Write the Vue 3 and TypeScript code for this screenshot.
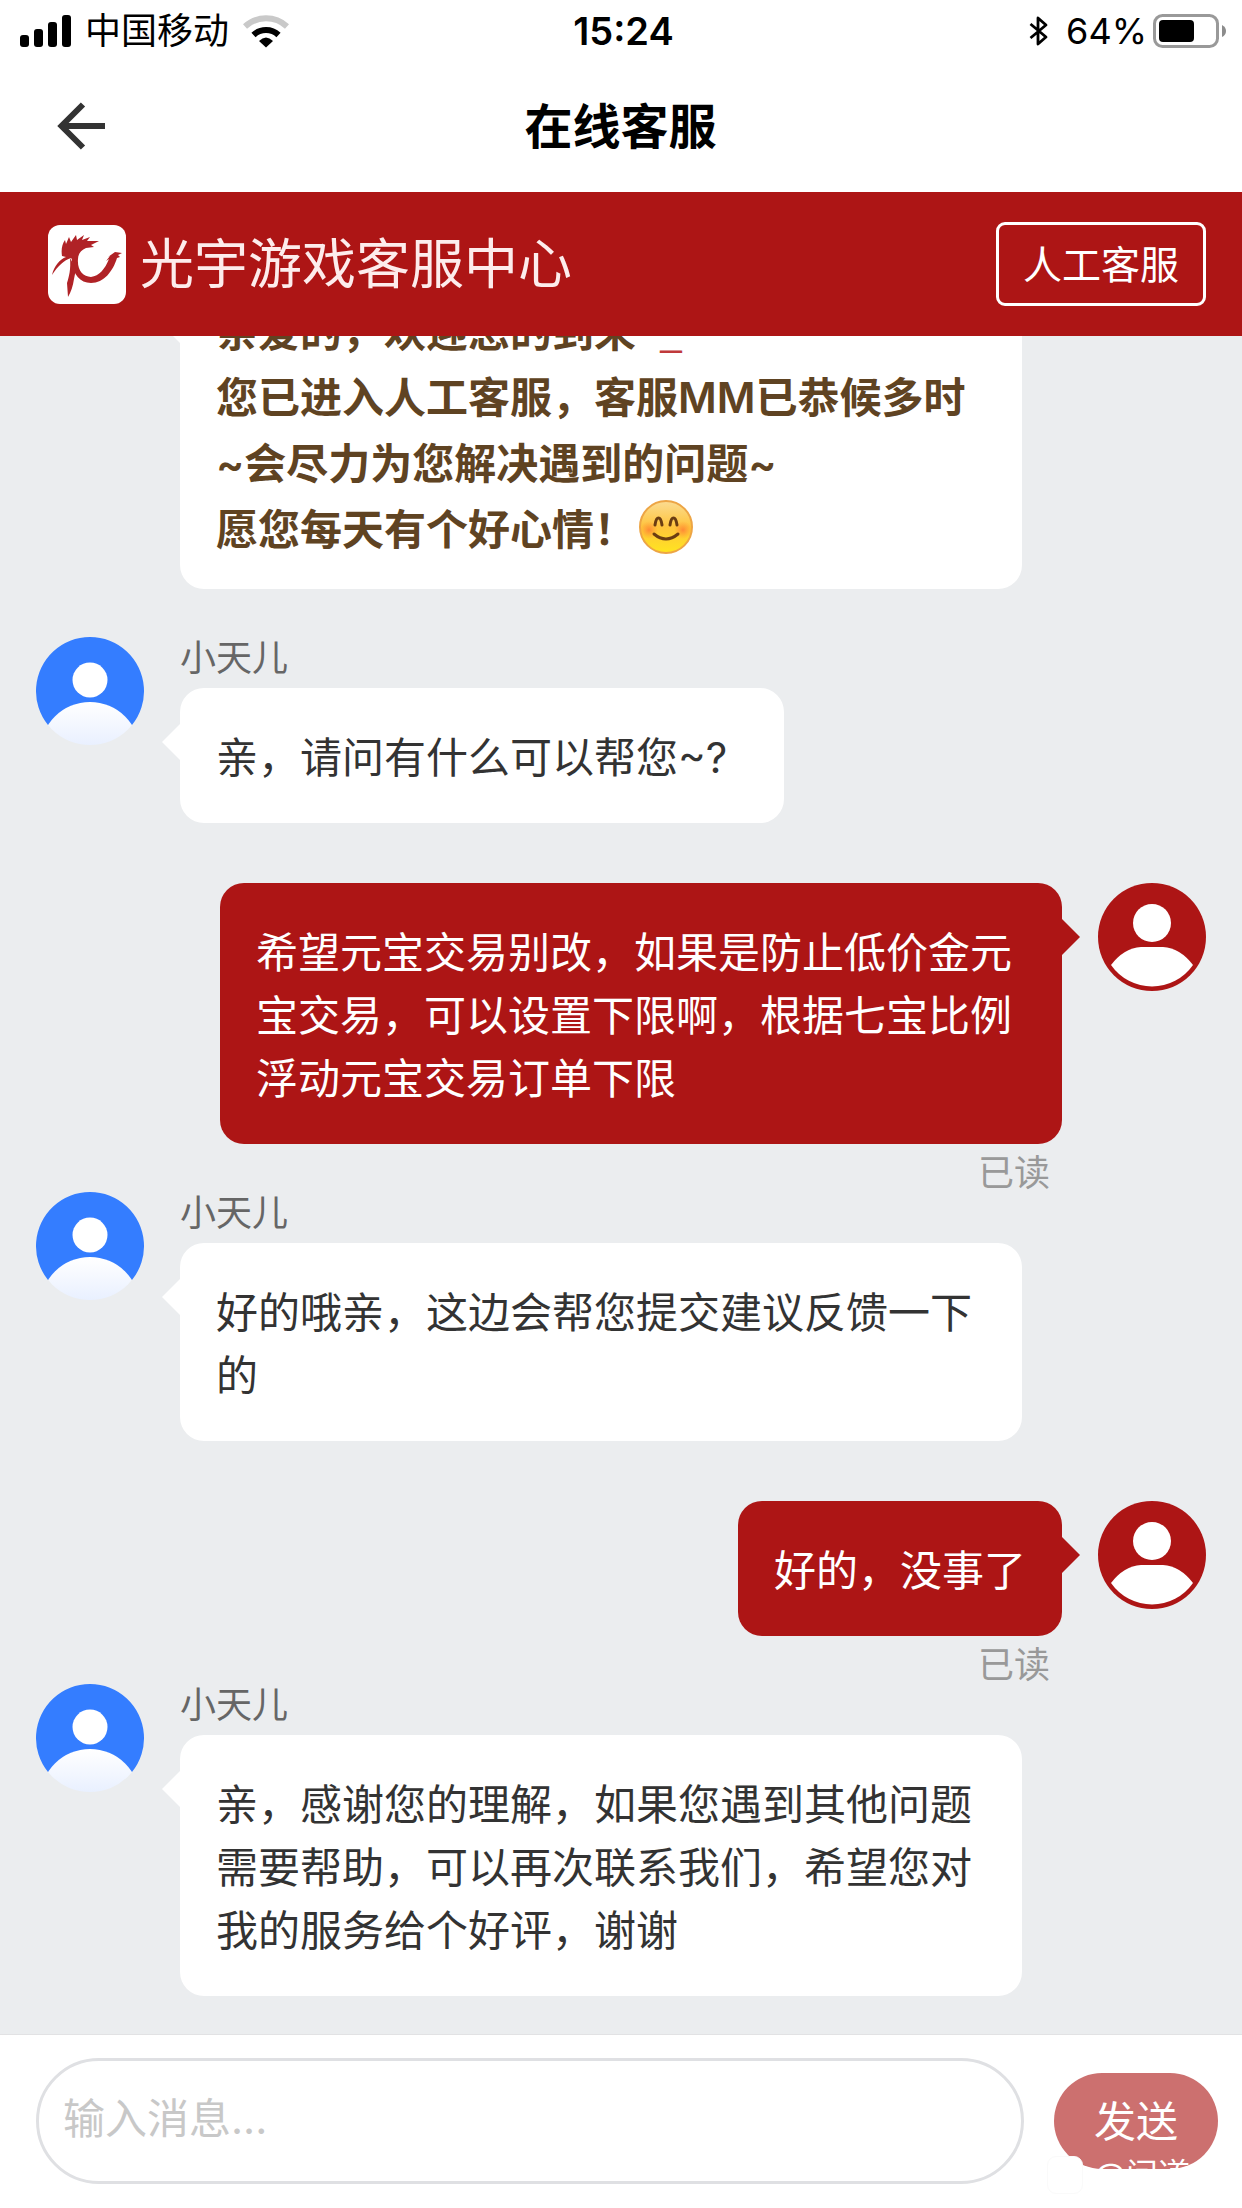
<script setup lang="ts">
import { ref } from 'vue'

interface Message {
  id: number
  from: 'agent' | 'user'
  name?: string
  text: string
}

const messages: Message[] = [
  { id: 1, from: 'agent', name: '小天儿', text: '亲，请问有什么可以帮您~?\u2002' },
  {
    id: 2,
    from: 'user',
    text: '希望元宝交易别改，如果是防止低价金元宝交易，可以设置下限啊，根据七宝比例浮动元宝交易订单下限',
  },
  { id: 3, from: 'agent', name: '小天儿', text: '好的哦亲，这边会帮您提交建议反馈一下的' },
  { id: 4, from: 'user', text: '好的，没事了' },
  {
    id: 5,
    from: 'agent',
    name: '小天儿',
    text: '亲，感谢您的理解，如果您遇到其他问题需要帮助，可以再次联系我们，希望您对我的服务给个好评，谢谢',
  },
]

const draft = ref('')
</script>

<template>
  <div class="app">
    <div class="status">
      <div class="status-left">
        <svg class="signal" width="51" height="32" viewBox="0 0 51 32" aria-hidden="true">
          <rect x="0" y="20" width="9" height="12" rx="3" />
          <rect x="14" y="14" width="9" height="18" rx="3" />
          <rect x="28" y="7" width="9" height="25" rx="3" />
          <rect x="42" y="0" width="9" height="32" rx="3" />
        </svg>
        <span>中国移动</span>
        <svg class="wifi" width="46" height="34" viewBox="0 0 46 34" aria-hidden="true">
          <path d="M2 12.5A31 31 0 0 1 44 12.5" fill="none" stroke="#c9c9c9" stroke-width="6" />
          <path d="M10.5 21A18 18 0 0 1 35.500 21" fill="none" stroke="#000" stroke-width="6" />
          <path d="M16 27Q23 20 30 27L23 33.500Z" />
        </svg>
      </div>
      <time class="clock">15:24</time>
      <div class="status-right">
        <svg class="bluetooth" width="19" height="30" viewBox="0 0 19 30" aria-hidden="true">
          <path d="M1.500 8L17 21L9 28V2L17 9L1.500 22" fill="none" stroke="#000" stroke-width="2.800" stroke-linejoin="round" />
        </svg>
        <span>64%</span>
        <svg class="battery" width="74" height="34" viewBox="0 0 74 34" aria-hidden="true">
          <rect x="1.500" y="1.500" width="63" height="31" rx="8" fill="none" stroke="#999" stroke-width="3" />
          <rect x="6" y="6" width="35" height="22" rx="4" />
          <path d="M69 11Q73 13 73 17T69 23Z" fill="#8c8c8c" />
        </svg>
      </div>
    </div>

    <header class="nav">
      <button class="back" type="button" aria-label="返回">
        <svg width="48" height="48" viewBox="0 0 48 48" aria-hidden="true">
          <path d="M26 2.500L4.500 24L26 45.500M5 24H48" fill="none" stroke="#333" stroke-width="6" />
        </svg>
      </button>
      <h1>在线客服</h1>
    </header>

    <div class="banner">
      <div class="brand">
        <svg width="78" height="79" viewBox="0 0 78 79" aria-hidden="true">
          <rect width="78" height="79" rx="12" fill="#fff" />
          <g fill="#b02226">
            <path d="M14 31C13 25 14 19 17 15L18 19L21 12L23 17L28 10L29 15L36 10L34 15L42 12L39 16L51 16L43 20L46 22L38 23C33 25 30 29 30 34C29 45 35 52 43 52C51 51 57 44 61 34L58 36L62 31L60 32L67 27L74 28L70 30L72 32L69 33C65 46 56 58 43 58C32 58 25 49 24 37C24 35 24 34 23 33C16 35 10 41 4 50C6 41 12 34 18 32Z" />
            <path d="M22 33C23 44 21 52 19 58L20 72C23 67 25 61 26 54L28 44Z" />
          </g>
        </svg>
        <span>光宇游戏客服中心</span>
      </div>
      <button class="human" type="button">人工客服</button>
    </div>

    <main class="chat">
      <section class="row agent">
        <div class="bubble welcome">
          亲爱的，欢迎您的到来<span class="face">^_^</span><br />
          您已进入人工客服，客服MM已恭候多时<br />
          ~会尽力为您解决遇到的问题~<br />
          愿您每天有个好心情！<svg class="emoji" width="54" height="54" viewBox="0 0 54 54" role="img" aria-label="微笑">
            <defs>
              <linearGradient id="face-fill" x1="0" y1="0" x2="0" y2="1">
                <stop offset="0" stop-color="#fbdc92" />
                <stop offset="0.500" stop-color="#ffc43c" />
                <stop offset="1" stop-color="#ffe51f" />
              </linearGradient>
              <radialGradient id="cheek">
                <stop offset="0" stop-color="#ff7034" stop-opacity="0.700" />
                <stop offset="1" stop-color="#ff8a34" stop-opacity="0" />
              </radialGradient>
            </defs>
            <circle cx="27" cy="27" r="26" fill="url(#face-fill)" stroke="#eda545" stroke-width="2" />
            <circle cx="10" cy="30" r="9" fill="url(#cheek)" />
            <circle cx="44" cy="30" r="9" fill="url(#cheek)" />
            <path d="M16 25Q17 18 19.500 18T23 25M31 25Q32 18 34.500 18T38 25" fill="none" stroke="#6b3d12" stroke-width="3" stroke-linecap="round" />
            <path d="M15 34Q27 44 39 34" fill="none" stroke="#6b3d12" stroke-width="3" stroke-linecap="round" />
          </svg>
        </div>
      </section>

      <section v-for="m in messages" :key="m.id" class="row" :class="m.from">
        <svg v-if="m.from === 'agent'" class="avatar" viewBox="0 0 108 108" aria-hidden="true">
          <defs>
            <linearGradient :id="'torso-' + m.id" x1="0" y1="65" x2="0" y2="108" gradientUnits="userSpaceOnUse">
              <stop offset="0" stop-color="#fff" />
              <stop offset="1" stop-color="#e9f0ff" />
            </linearGradient>
            <clipPath :id="'disc-' + m.id"><circle cx="54" cy="54" r="54" /></clipPath>
          </defs>
          <path d="M12 88A54 54 0 1 1 96 88Z" fill="#347dff" />
          <g :clip-path="'url(#disc-' + m.id + ')'">
            <circle cx="54" cy="115" r="50" :fill="'url(#torso-' + m.id + ')'" />
          </g>
          <circle cx="54" cy="43" r="17.500" fill="#fff" />
        </svg>
        <svg v-else class="avatar" viewBox="0 0 108 108" aria-hidden="true">
          <circle cx="54" cy="54" r="54" fill="#ad1515" />
          <circle cx="54" cy="40" r="19" fill="#fff" />
          <path d="M13 82Q26 65 43 64H65Q82 65 95 82A50 50 0 0 1 13 82Z" fill="#fff" />
        </svg>
        <div class="body">
          <div v-if="m.name" class="name">{{ m.name }}</div>
          <div class="bubble">{{ m.text }}</div>
          <div v-if="m.from === 'user'" class="read">已读</div>
        </div>
      </section>
    </main>

    <form class="composer" @submit.prevent>
      <input v-model="draft" type="text" aria-label="输入消息" placeholder="输入消息..." />
      <button class="send" type="submit">发送</button>
      <div class="watermark">
        <span class="mark"></span>
        <span>@问道</span>
      </div>
    </form>
  </div>
</template>

<style>
body {
  background: #fff;
}
</style>

<style scoped>
.app {
  display: flex;
  flex-direction: column;
  height: 100vh;
  overflow: hidden;
  background: #fff;
  color: #333;
  font-family: Inter, "Noto Sans CJK SC", sans-serif;
  font-size: 42px;
  line-height: 63px;
}
button,
input {
  box-sizing: border-box;
  margin: 0;
  padding: 0;
  border: 0;
  background: none;
  color: inherit;
  font: inherit;
}
svg {
  flex: none;
}

.status {
  display: grid;
  grid-template-columns: 1fr auto 1fr;
  align-items: center;
  height: 62px;
  padding: 0 15px 0 20px;
  color: #000;
  font-size: 36px;
  line-height: 62px;
}
.status-left,
.status-right {
  display: flex;
  align-items: center;
}
.status-left {
  gap: 14px;
}
.status-right {
  justify-content: flex-end;
}
.bluetooth {
  margin-right: 18px;
}
.battery {
  margin-left: 6px;
}
.clock {
  font-size: 38px;
  font-weight: 600;
}

.nav {
  display: grid;
  grid-template-columns: 1fr auto 1fr;
  align-items: center;
  height: 128px;
  padding: 0 58px 2px 57px;
}
.back {
  display: flex;
  width: 48px;
  cursor: pointer;
}
.nav h1 {
  margin: 0;
  color: #000;
  font-size: 48px;
  font-weight: 600;
}

.banner {
  display: flex;
  flex: none;
  align-items: center;
  justify-content: space-between;
  height: 144px;
  padding: 0 36px 0 48px;
  background: #ad1515;
  color: #fff;
}
.brand {
  display: flex;
  align-items: center;
  gap: 14px;
  color: #fdecec;
  font-size: 54px;
}
.human {
  width: 210px;
  height: 84px;
  padding-top: 2px;
  border: 3px solid #fff;
  border-radius: 9px;
  font-size: 39px;
  line-height: 76px;
}

.chat {
  display: flex;
  flex: 1;
  flex-direction: column;
  justify-content: flex-end;
  min-height: 0;
  padding-bottom: 38px;
  overflow: hidden;
  background: #ebedef;
}
.row {
  display: flex;
  flex: none;
  gap: 36px;
}
.agent {
  padding: 0 220px 48px 36px;
}
.agent + .user {
  margin-top: 12px;
}
.agent:last-child {
  padding-bottom: 0;
}
.user {
  flex-direction: row-reverse;
  padding: 0 36px 0 220px;
}
.avatar {
  width: 108px;
  height: 108px;
}
.body {
  display: flex;
  flex-direction: column;
  align-items: flex-start;
}
.user .body {
  align-items: flex-end;
}
.name {
  margin-bottom: 9px;
  color: #666;
  font-size: 36px;
  line-height: 42px;
}
.bubble {
  position: relative;
  padding: 38px 36px 34px;
  border-radius: 24px;
  background: #fff;
  white-space: break-spaces;
}
.bubble::before {
  position: absolute;
  top: 36px;
  right: 100%;
  width: 18px;
  height: 36px;
  background: inherit;
  clip-path: polygon(100% 0, 0 50%, 100% 100%);
  content: "";
}
.user .bubble {
  background: #ad1515;
  color: #fff;
}
.user .bubble::before {
  right: auto;
  left: 100%;
  clip-path: polygon(0 0, 100% 50%, 0 100%);
}
.welcome {
  flex: 1;
  margin-left: 144px;
  padding: 25px 36px 26px;
  color: #5f4322;
  font-weight: 600;
  line-height: 66px;
  white-space: normal;
}
.face {
  color: #c0393b;
  font-family: "Noto Sans CJK SC", sans-serif;
  font-weight: 400;
}
.emoji {
  margin-left: 3px;
  vertical-align: -9px;
}
.read {
  padding: 10px 12px 0 0;
  color: #999;
  font-size: 36px;
  line-height: 38px;
}

.composer {
  position: relative;
  display: flex;
  flex: none;
  align-items: center;
  gap: 30px;
  padding: 23px 24px 24px 36px;
  border-top: 1px solid #e2e2e4;
}
.composer input {
  flex: 1;
  min-width: 0;
  height: 126px;
  padding: 0 24px 5px;
  border: 3px solid #dfe0e3;
  border-radius: 63px;
}
.composer input::placeholder {
  color: #c8c8c8;
  opacity: 1;
}
.send {
  width: 164px;
  height: 96px;
  border-radius: 48px;
  background: #cc706f;
  color: #fff;
}
.watermark {
  position: absolute;
  right: 52px;
  bottom: 12px;
  display: flex;
  align-items: center;
  gap: 12px;
  color: #fff;
  font-size: 32px;
  line-height: 42px;
  pointer-events: none;
}
.mark {
  box-sizing: border-box;
  width: 36px;
  height: 38px;
  border: 1px solid #fafafa;
  border-radius: 9px;
  background: #fff;
}
</style>
